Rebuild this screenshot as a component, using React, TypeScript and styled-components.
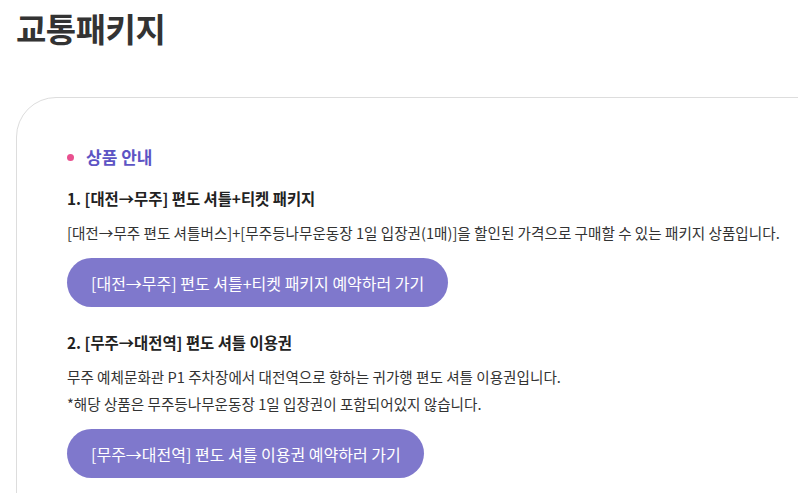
import React from "react";
import styled, { createGlobalStyle } from "styled-components";

const GlobalStyle = createGlobalStyle`
  body {
    margin: 0;
    background: #fff;
    font-family: "Noto Sans CJK KR", "Noto Sans", sans-serif;
    color: #333;
    overflow: hidden;
  }
`;

const Page = styled.div`
  width: 798px;
  height: 493px;
  overflow: hidden;
  padding: 0 0 0 16px;
  box-sizing: border-box;
`;

const Title = styled.h1`
  margin: 0;
  padding-top: 5px;
  font-size: 33px;
  line-height: 46px;
  font-weight: 700;
  color: #333;
  letter-spacing: -0.5px;
`;

const Card = styled.section`
  margin-top: 46px;
  margin-right: -40px;
  border: 1px solid #dddddd;
  border-top-left-radius: 40px;
  padding: 46px 0 40px 50px;
`;

const SectionTitle = styled.h2`
  display: flex;
  align-items: center;
  gap: 12px;
  margin: 0 0 16px 0;
  font-size: 17px;
  line-height: 26px;
  font-weight: 700;
  color: #5d54c4;

  &::before {
    content: "";
    width: 7px;
    height: 7px;
    border-radius: 50%;
    background: #e9508f;
  }
`;

const Item = styled.div`
  margin-bottom: 23px;
`;

const ItemTitle = styled.h3`
  margin: 0 0 9px;
  font-size: 15.4px;
  line-height: 24px;
  font-weight: 700;
  color: #222;
`;

const Text = styled.p`
  margin: 0;
  font-size: 14.6px;
  line-height: 27px;
  color: #333;
`;

const Button = styled.a`
  display: inline-flex;
  align-items: center;
  height: 49px;
  margin-top: 12px;
  padding: 0 23.5px 0 24px;
  border-radius: 25px;
  background: #7f78cc;
  color: #fff;
  font-size: 16px;
  text-decoration: none;
`;

export default function App() {
  return (
    <Page>
      <GlobalStyle />
      <Title>교통패키지</Title>
      <Card>
        <SectionTitle>상품 안내</SectionTitle>
        <Item>
          <ItemTitle>1. [대전→무주] 편도 셔틀+티켓 패키지</ItemTitle>
          <Text>
            [대전→무주 편도 셔틀버스]+[무주등나무운동장 1일 입장권(1매)]을 할인된 가격으로 구매할 수 있는 패키지 상품입니다.
          </Text>
          <Button href="#">[대전→무주] 편도 셔틀+티켓 패키지 예약하러 가기</Button>
        </Item>
        <Item>
          <ItemTitle>2. [무주→대전역] 편도 셔틀 이용권</ItemTitle>
          <Text>무주 예체문화관 P1 주차장에서 대전역으로 향하는 귀가행 편도 셔틀 이용권입니다.</Text>
          <Text>*해당 상품은 무주등나무운동장 1일 입장권이 포함되어있지 않습니다.</Text>
          <Button href="#">[무주→대전역] 편도 셔틀 이용권 예약하러 가기</Button>
        </Item>
      </Card>
    </Page>
  );
}
